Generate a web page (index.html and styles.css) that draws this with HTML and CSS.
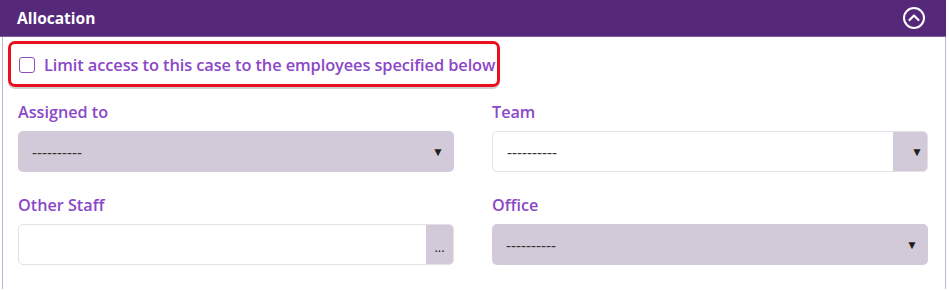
FILE: index.html
```html
<!DOCTYPE html>
<html lang="en">
<head>
    <meta charset="UTF-8">
    <meta name="viewport" content="width=device-width, initial-scale=1.0">
    <title>Allocation</title>
    <link rel="stylesheet" href="styles.css">
</head>
<body>

<div class="panel">
    <div class="panel-header">
        <span class="panel-title">Allocation</span>
        <svg class="collapse-icon" width="24" height="24" viewBox="0 0 24 24">
            <circle cx="12" cy="12" r="10" fill="none" stroke="#fff" stroke-width="2"/>
            <path d="M7.5 14 L12 9.5 L16.5 14" fill="none" stroke="#fff" stroke-width="2.2" stroke-linecap="round" stroke-linejoin="round"/>
        </svg>
    </div>

    <div class="panel-body">
        <div class="limit-box">
            <label class="limit-label">
                <span class="checkbox"></span>
                Limit access to this case to the employees specified below
            </label>
        </div>

        <div class="form-grid">
            <div class="field">
                <label>Assigned to</label>
                <div class="select filled">
                    <span>----------</span>
                    <span class="arrow">&#9660;</span>
                </div>
            </div>
            <div class="field">
                <label>Team</label>
                <div class="select plain">
                    <span>----------</span>
                    <span class="addon"><span class="arrow">&#9660;</span></span>
                </div>
            </div>
            <div class="field">
                <label>Other Staff</label>
                <div class="select plain">
                    <span></span>
                    <span class="addon dots">...</span>
                </div>
            </div>
            <div class="field">
                <label>Office</label>
                <div class="select filled">
                    <span>----------</span>
                    <span class="arrow">&#9660;</span>
                </div>
            </div>
        </div>
    </div>
</div>

</body>
</html>
```

FILE: styles.css
```css
body {
    font-family: "Open Sans", "Noto Sans", Arial, sans-serif;
    background-color: #fff;
    margin: 0;
    padding: 0;
}

.panel {
    width: 946px;
}

.panel-header {
    background-color: #55287a;
    height: 37px;
    border-bottom: 1px solid #7d5a9c;
    display: flex;
    align-items: center;
    justify-content: space-between;
    padding: 0 20px 0 17px;
    box-sizing: border-box;
}

.panel-title {
    color: #fff;
    font-weight: 700;
    font-size: 15.5px;
    margin-top: -1px;
}

.collapse-icon {
    margin-top: -1px;
}

.panel-body {
    margin-left: 2px;
    border-left: 1px solid #c1b3d2;
    border-right: 1px solid #c1b3d2;
    padding: 4px 16px 26px 5px;
    height: 252px;
    box-sizing: border-box;
}

.limit-box {
    width: 492px;
    height: 46px;
    box-sizing: border-box;
    border: 3px solid #e8101c;
    border-radius: 7px;
    display: flex;
    align-items: center;
    padding-left: 8px;
    box-shadow: 0 2px 0 #cfcfd4;
}

.limit-label {
    display: flex;
    align-items: center;
    color: #8b47c8;
    font-weight: 600;
    font-size: 16.4px;
    letter-spacing: -0.1px;
    margin-top: 1px;
}

.checkbox {
    width: 14px;
    height: 14px;
    border: 1.5px solid #8a4fc0;
    border-radius: 3px;
    margin-right: 9px;
}

.form-grid {
    display: grid;
    grid-template-columns: 436px 436px;
    column-gap: 38px;
    row-gap: 22px;
    margin-top: 14px;
    padding-left: 10px;
}

.field label {
    display: block;
    color: #8b47c8;
    font-weight: 600;
    font-size: 16.2px;
    margin-bottom: 8px;
}

.select {
    height: 41px;
    box-sizing: border-box;
    border-radius: 5px;
    display: flex;
    align-items: center;
    justify-content: space-between;
    font-size: 15.5px;
    color: #333;
    overflow: hidden;
}

.select span:first-child {
    padding-left: 14px;
}

.filled {
    background-color: #d3cad9;
    padding-right: 10px;
}

.plain {
    background-color: #fff;
    border: 1px solid #e3e1e6;
}

.addon {
    background-color: #d3cad9;
    height: 100%;
    width: 34px;
    display: flex;
    align-items: center;
    justify-content: center;
}

.dots {
    width: 27px;
    font-size: 13px;
    padding-top: 4px;
    box-sizing: border-box;
    color: #222;
}

.arrow {
    font-size: 12px;
    color: #1e1e1e;
}
```
